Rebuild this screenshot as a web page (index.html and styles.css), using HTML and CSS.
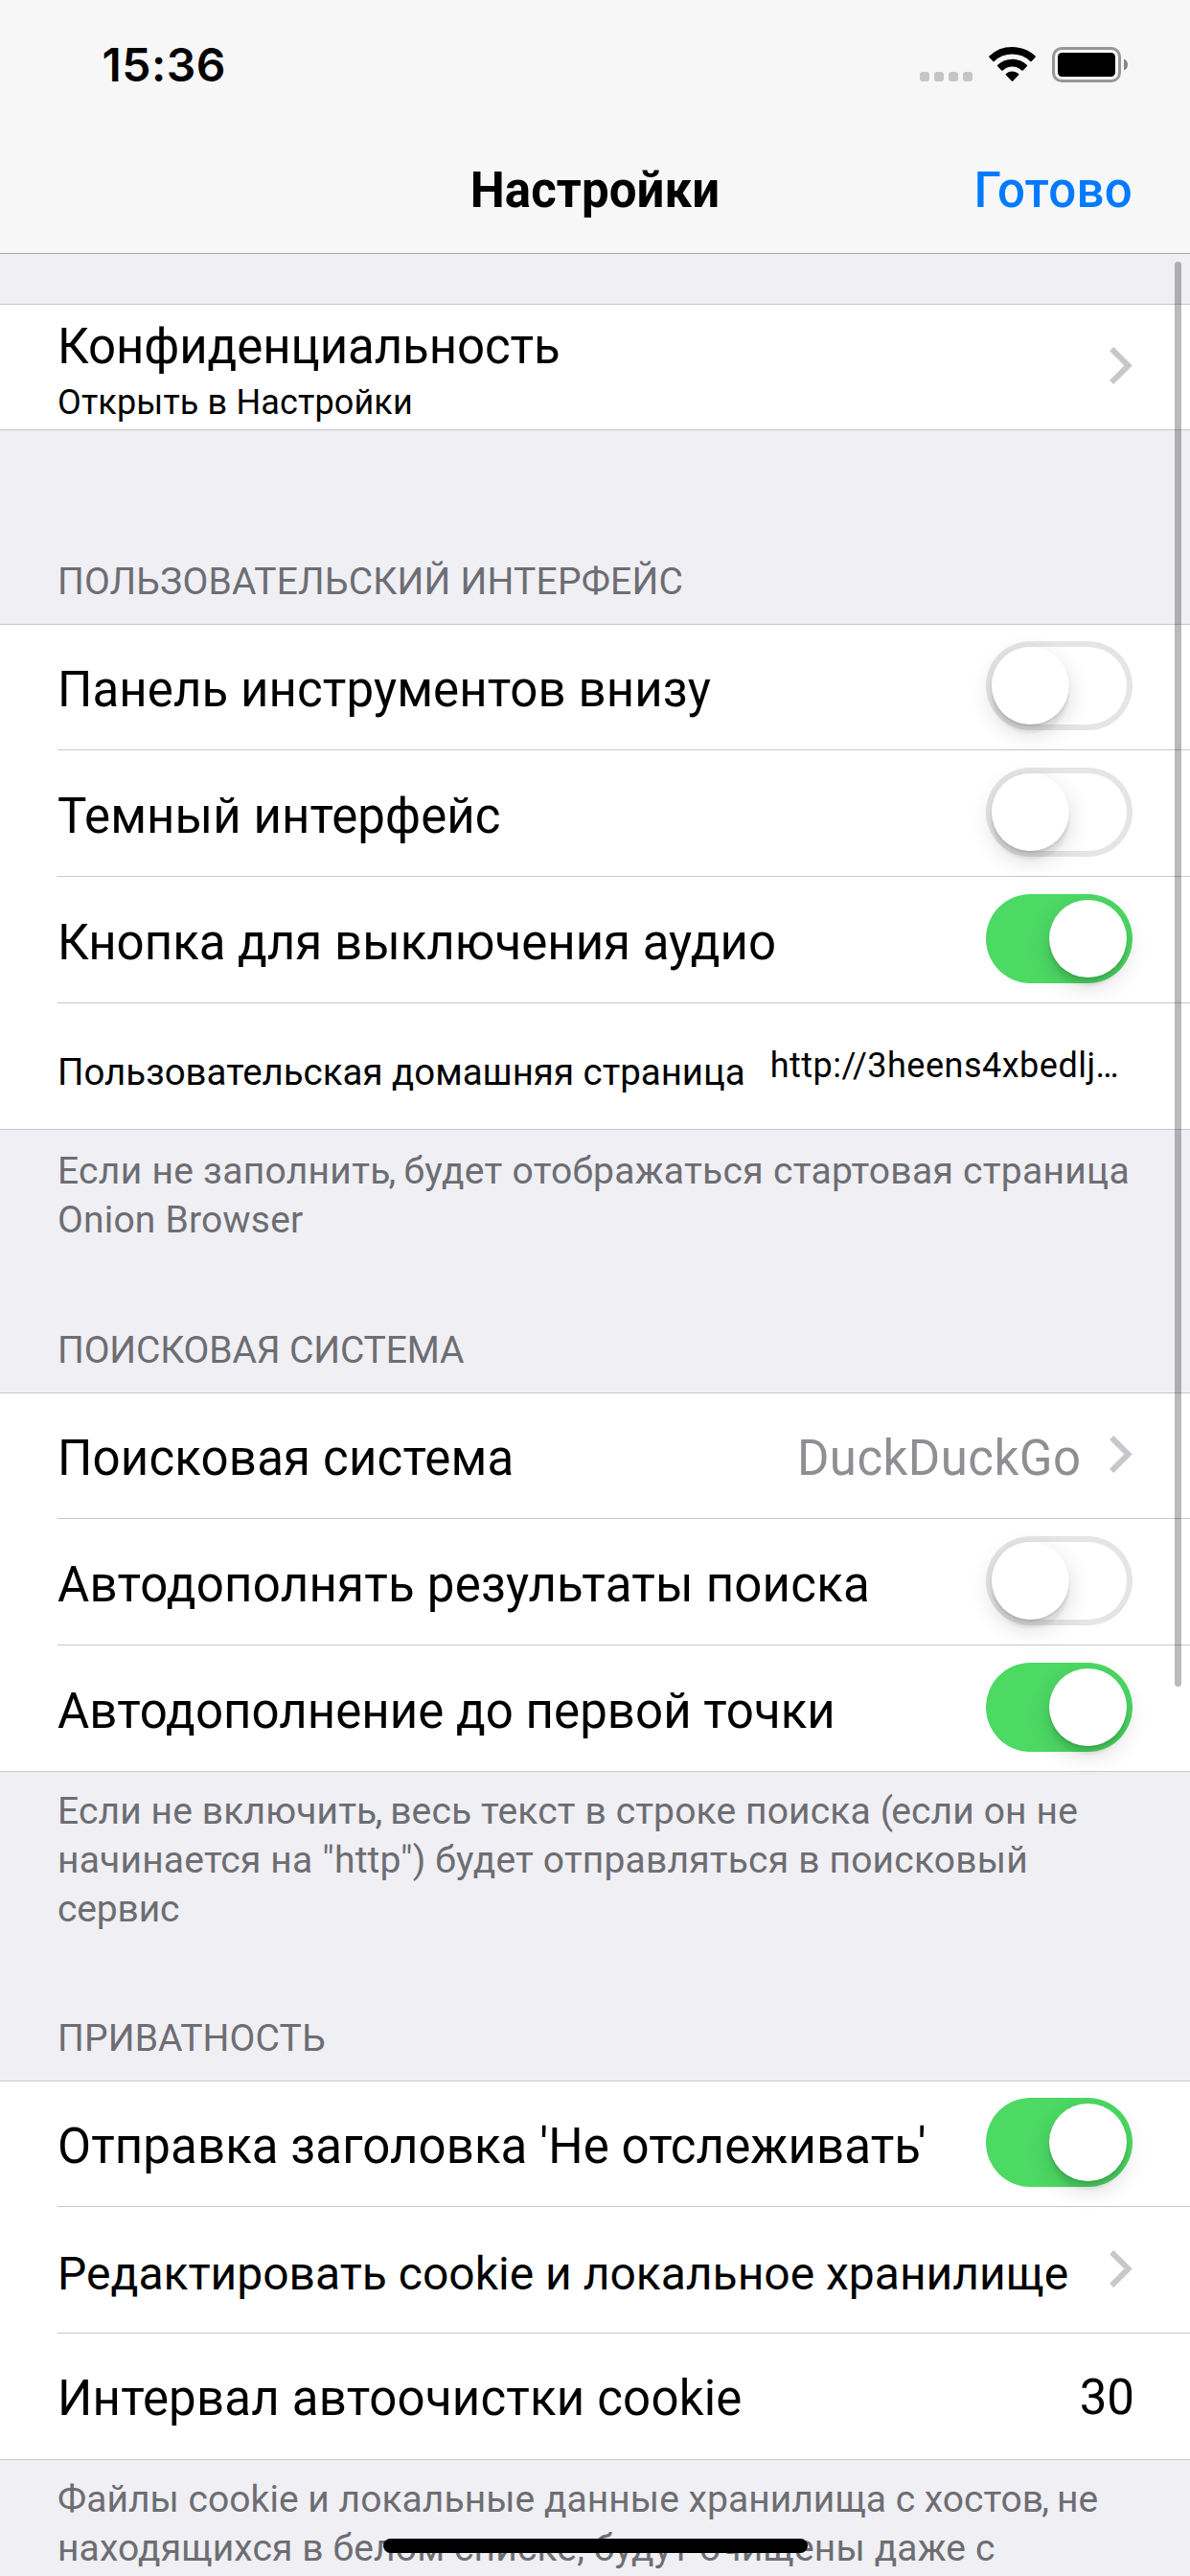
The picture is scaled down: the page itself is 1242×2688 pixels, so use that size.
FILE: index.html
```html
<!DOCTYPE html>
<html lang="ru">
<head>
<meta charset="utf-8">
<title>Настройки</title>
<link rel="stylesheet" href="styles.css">
</head>
<body>
<header class="navbar">
  <div class="status">
    <span class="clock">15:36</span>
    <div class="status-icons">
      <div class="signal"><i></i><i></i><i></i><i></i></div>
      <svg class="wifi" width="49" height="36" viewBox="0 0 49 36"><path d="M24.5 0C33.8 0 42.3 3.5 48.6 9.4q.7.7 0 1.4l-4 4.1q-.7.7-1.4 0a27 27 0 0 0-37.4 0q-.7.7-1.4 0l-4-4.1q-.7-.7 0-1.4A35.3 35.3 0 0 1 24.5 0z"/><path d="M24.5 12.8c5.9 0 11.3 2.300 15.300 6q.7.7 0 1.400l-4.100 4.200q-.7.6-1.400 0a14.500 14.500 0 0 0-19.600 0q-.7.6-1.400 0l-4.100-4.200q-.7-.7 0-1.400a22.500 22.500 0 0 1 15.300-6z"/><path d="M24.5 25.500c2.500 0 4.800.9 6.600 2.400q.7.7 0 1.400l-5.900 6.200q-.7.6-1.400 0l-5.900-6.200q-.7-.7 0-1.400a10.200 10.200 0 0 1 6.600-2.400z"/></svg>
      <svg class="battery" width="80" height="37" viewBox="0 0 80 37"><rect x="1.5" y="1.5" width="69" height="34" rx="8.5" fill="none" stroke="#979797" stroke-width="3"/><rect x="6" y="6" width="60" height="25" rx="4.5"/><path d="M75 12.500c2.500 1 4 3.300 4 6s-1.500 5-4 6z" fill="#858585"/></svg>
    </div>
  </div>
  <div class="titlebar">
    <h1 class="title">Настройки</h1>
    <a class="done">Готово</a>
  </div>
</header>
<main class="list">
  <section class="group group-first">
    <div class="row">
      <div class="stack"><span class="label track-tight">Конфиденциальность</span><span class="detail">Открыть в Настройки</span></div>
      <svg class="chevron" viewBox="0 0 24 39"><path d="M2.200 2.200 19.500 19.500 2.200 36.800"/></svg>
    </div>
  </section>

  <h2 class="section-title track-5">ПОЛЬЗОВАТЕЛЬСКИЙ ИНТЕРФЕЙС</h2>
  <section class="group">
    <div class="row"><span class="label track-2">Панель инструментов внизу</span><span class="switch"></span></div>
    <div class="row"><span class="label track-2">Темный интерфейс</span><span class="switch"></span></div>
    <div class="row"><span class="label">Кнопка для выключения аудио</span><span class="switch on"></span></div>
    <div class="row"><span class="label small">Пользовательская домашняя страница</span><span class="url">http://3heens4xbedlj…</span></div>
  </section>
  <p class="footnote footnote-home"><span class="line track-6">Если не заполнит<span class="kern">ь,</span> будет отображаться стартовая страница</span><span class="line track-4">Onion Browser</span></p>

  <h2 class="section-title track-tighter">ПОИСКОВАЯ СИСТЕМА</h2>
  <section class="group">
    <div class="row"><span class="label track-4">Поисковая система</span><span class="value">DuckDuckGo</span><svg class="chevron" viewBox="0 0 24 39"><path d="M2.200 2.200 19.500 19.500 2.200 36.800"/></svg></div>
    <div class="row"><span class="label track-5">Автодополнять результаты поиска</span><span class="switch"></span></div>
    <div class="row"><span class="label track-1">Автодополнение до первой точки</span><span class="switch on"></span></div>
  </section>
  <p class="footnote footnote-search"><span class="line track-3">Если не включит<span class="kern">ь,</span> весь текст в строке поиска <span class="kern">(</span>если он не</span><span class="line track-4">начинается на "http") будет отправляться в поисковый</span><span class="line track-tighter">сервис</span></p>

  <h2 class="section-title track-3">ПРИВАТНОСТЬ</h2>
  <section class="group">
    <div class="row"><span class="label track-2">Отправка заголовка 'Не отслеживать'</span><span class="switch on"></span></div>
    <div class="row"><span class="label fitted">Редактировать cookie и локальное хранилище</span><svg class="chevron" viewBox="0 0 24 39"><path d="M2.200 2.200 19.500 19.500 2.200 36.800"/></svg></div>
    <div class="row"><span class="label raised track-4">Интервал автоочистки cookie</span><span class="number">30</span></div>
  </section>
  <p class="footnote"><span class="line track-1">Файлы cookie и локальные данные хранилища с хосто<span class="kern">в,</span> не</span><span class="line track-3">находящихся в белом списке, будут очищены даже с</span></p>
</main>
<div class="scrollbar"></div>
<div class="home-indicator"></div>
</body>
</html>
```
FILE: styles.css
```css
* { box-sizing: border-box; }

body {
  margin: 0;
  height: 2688px;
  overflow: hidden;
  position: relative;
  background: #efeff4;
  color: #000;
  font-family: Roboto, "Noto Sans", sans-serif;
}

h1, h2, p { margin: 0; font-weight: 400; }

/* Letter tracking steps */
.track-tighter { letter-spacing: -.144px; }
.track-tight { letter-spacing: -.09px; }
.track-1 { letter-spacing: .04px; }
.track-2 { letter-spacing: .09px; }
.track-3 { letter-spacing: .135px; }
.track-4 { letter-spacing: .185px; }
.track-5 { letter-spacing: .225px; }
.track-6 { letter-spacing: .29px; }
.kern { letter-spacing: -1.8px; }

/* Status bar and title */
.navbar {
  height: 265px;
  background: #f7f7f7;
  border-bottom: 1px solid #a7a7ab;
}

.status {
  display: flex;
  justify-content: space-between;
  align-items: flex-start;
  height: 132px;
  padding: 0 65px 0 106.5px;
}

.clock {
  padding-top: 38px;
  font: 600 48px/60px Inter, sans-serif;
  letter-spacing: .45px;
}

.status-icons { display: flex; align-items: flex-start; padding-top: 49px; }
.signal { display: flex; gap: 5px; padding-top: 26px; }
.signal i { width: 10px; height: 10px; border-radius: 3px; background: #c5c5c5; }
.wifi { margin-left: 17px; }
.battery { margin-left: 17px; margin-right: -1px; }

.titlebar {
  display: grid;
  grid-template-columns: 1fr auto 1fr;
  padding: 37px 60px 0;
  font-size: 51px;
  line-height: 60px;
}

.title { grid-column: 2; font-size: 51px; font-weight: 700; letter-spacing: .08px; }
.done { justify-self: end; font-weight: 500; letter-spacing: .3px; color: #007aff; }

/* Table groups */
.group {
  background: #fff;
  border-top: 1px solid #c8c7cc;
  border-bottom: 1px solid #c8c7cc;
}
.group-first { margin-top: 52px; }

.row {
  display: flex;
  align-items: flex-start;
  height: 132px;
  margin-left: 60px;
  padding-right: 60px;
  border-bottom: 1px solid #c8c7cc;
  white-space: nowrap;
}
.row:first-child { margin-top: -1px; }
.row:last-child { height: 131px; border-bottom: 0; }

.label {
  flex: 1;
  padding-top: 39px;
  font-size: 51px;
  line-height: 60px;
}
.small { flex: none; padding-top: 42px; font-size: 38.45px; }
.fitted { padding-top: 40px; font-size: 48px; }
.raised { padding-top: 38px; }

.stack { flex: 1; display: flex; flex-direction: column; }
.stack .label { flex: none; padding-top: 15px; }
.detail { padding-top: 7px; font-size: 36px; line-height: 42px; letter-spacing: .14px; }

.value {
  margin-right: 29.5px;
  padding-top: 39px;
  font-size: 51px;
  line-height: 60px;
  letter-spacing: .45px;
  color: #8e8e93;
}
.number { margin-right: -2px; padding-top: 37px; font-size: 51px; line-height: 60px; }
.url {
  margin-left: 26px;
  padding-top: 35px;
  font-size: 36px;
  line-height: 60px;
  letter-spacing: .5px;
}

.chevron {
  flex: none;
  width: 24px;
  height: 39px;
  margin-top: 45px;
  fill: none;
  stroke: #c7c7cc;
  stroke-width: 6;
}

/* Switches */
.switch {
  width: 153px;
  height: 93px;
  margin-top: 18px;
  padding: 6px;
  border-radius: 47px;
  background: #fff;
  box-shadow: inset 0 0 0 6px #e5e5e5;
}
.switch::before {
  content: "";
  display: block;
  width: 81px;
  height: 81px;
  border-radius: 50%;
  background: #fff;
  box-shadow: 0 9px 24px rgba(0, 0, 0, .15), 0 9px 3px rgba(0, 0, 0, .06), 0 2px 2px rgba(0, 0, 0, .1);
}
.switch.on { background: #4cd964; box-shadow: none; }
.switch.on::before { margin-left: auto; }

/* Section captions */
.section-title,
.footnote {
  padding-left: 60px;
  font-size: 39px;
  line-height: 51px;
  color: #6d6d72;
  white-space: nowrap;
}
.section-title { padding-bottom: 18px; }
.group-first + .section-title { padding-top: 133px; }
.footnote { padding-top: 16px; }
.footnote-home { height: 205px; padding-top: 18px; }
.footnote-search { height: 253px; }
.line { display: block; }

.scrollbar {
  position: absolute;
  top: 273px;
  left: 1226px;
  width: 7px;
  height: 1487px;
  border-radius: 4px;
  background: rgba(0, 0, 0, .27);
}

.home-indicator {
  position: absolute;
  left: 400px;
  top: 2649px;
  width: 443px;
  height: 15px;
  border-radius: 8px;
  background: #000;
}
```
